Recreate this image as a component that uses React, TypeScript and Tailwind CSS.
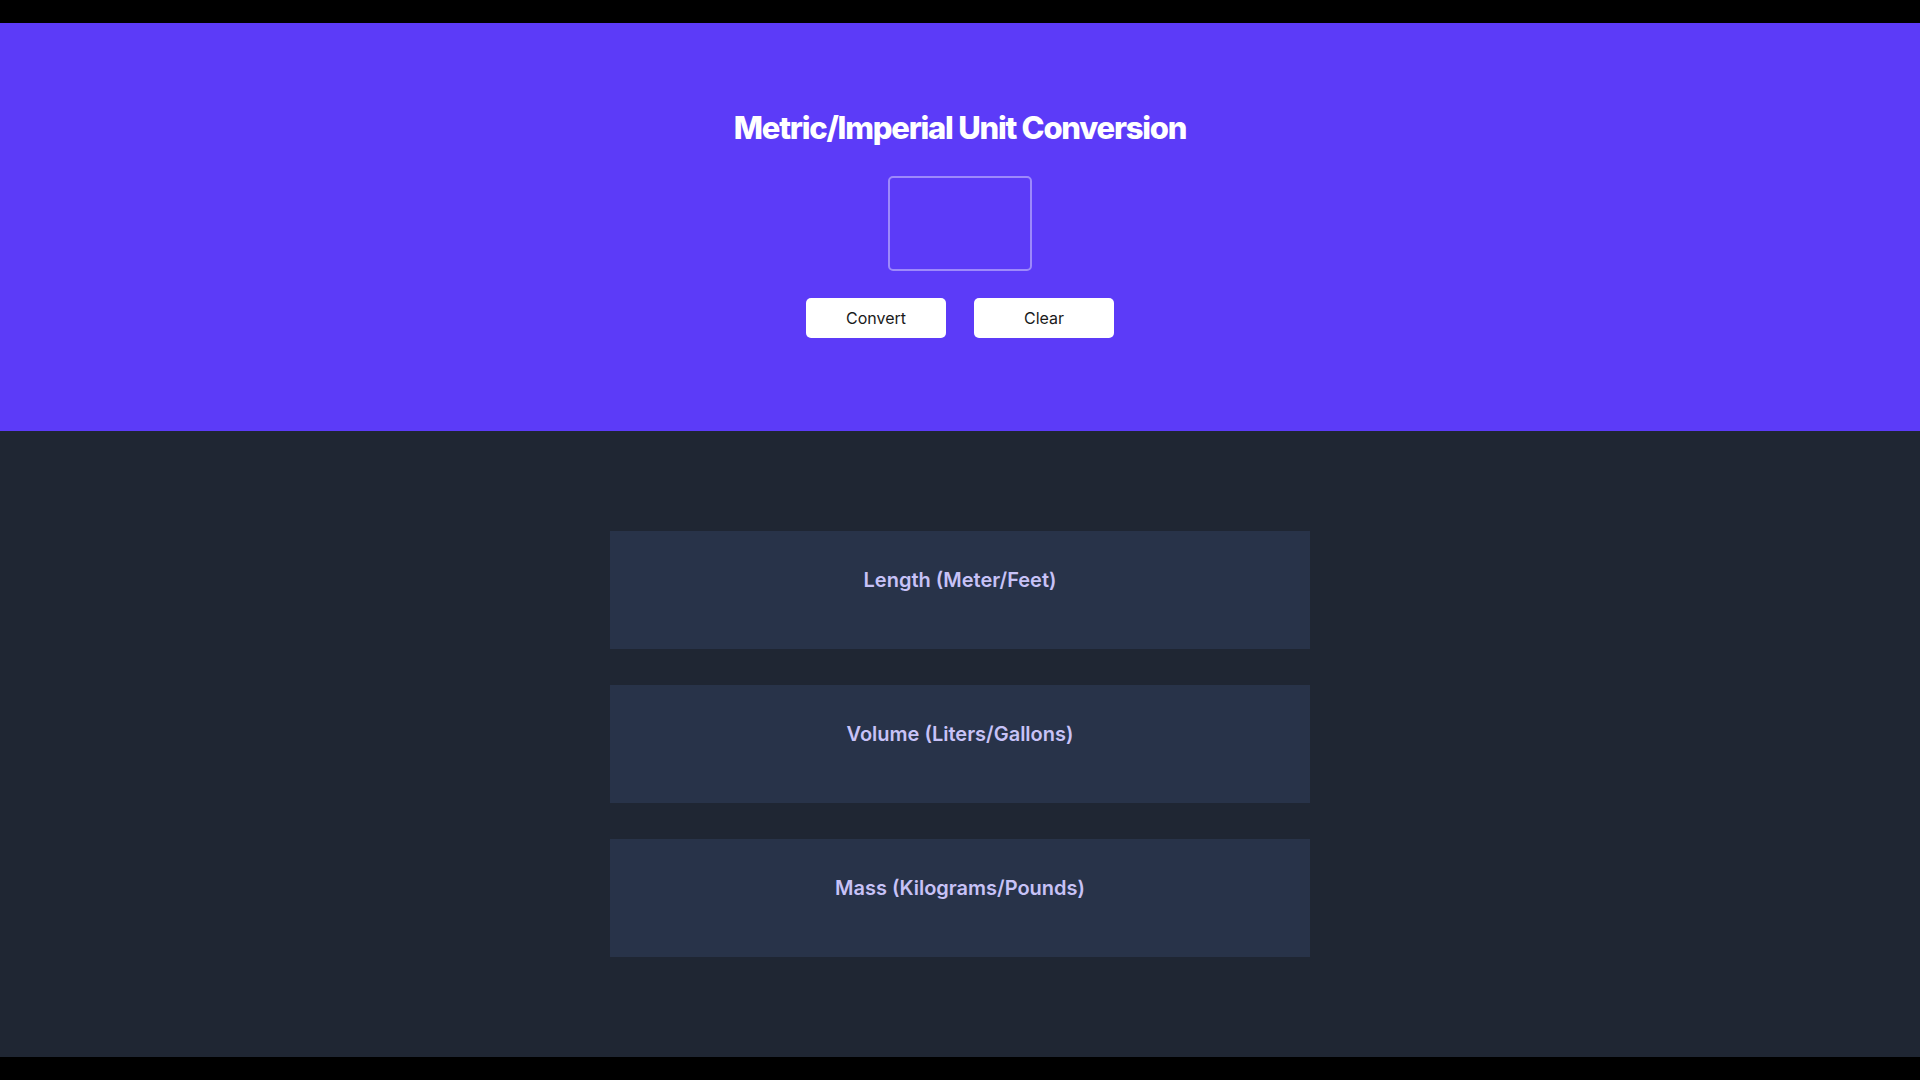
const categories = [
  "Length (Meter/Feet)",
  "Volume (Liters/Gallons)",
  "Mass (Kilograms/Pounds)",
];

export default function App() {
  return (
    <div className="flex h-screen w-full flex-col bg-black py-[23px] font-['Inter',sans-serif]">
      <section className="flex h-[408px] shrink-0 flex-col items-center bg-[#5c3bf8] pt-[85px]">
        <h1 className="text-[31px] leading-[40px] font-extrabold tracking-[-0.04em] text-white">
          Metric/Imperial Unit Conversion
        </h1>
        <input
          type="text"
          className="mt-[28px] h-[95px] w-[144px] rounded-[5px] border-2 border-white/40 bg-transparent text-center text-white outline-none"
        />
        <div className="mt-[27px] flex gap-[28px]">
          <button className="h-10 w-[140px] rounded-[5px] bg-white text-base text-[#1a1a1a]">
            Convert
          </button>
          <button className="h-10 w-[140px] rounded-[5px] bg-white text-base text-[#1a1a1a]">
            Clear
          </button>
        </div>
      </section>
      <section className="flex flex-1 flex-col items-center gap-[36px] bg-[#1f2633] py-[100px]">
        {categories.map((c) => (
          <div
            key={c}
            className="flex h-[118px] w-[700px] flex-col items-center bg-[#283349] pt-[35px]"
          >
            <h2 className="text-xl leading-7 font-semibold text-[#c7c2f7]">{c}</h2>
          </div>
        ))}
      </section>
    </div>
  );
}
